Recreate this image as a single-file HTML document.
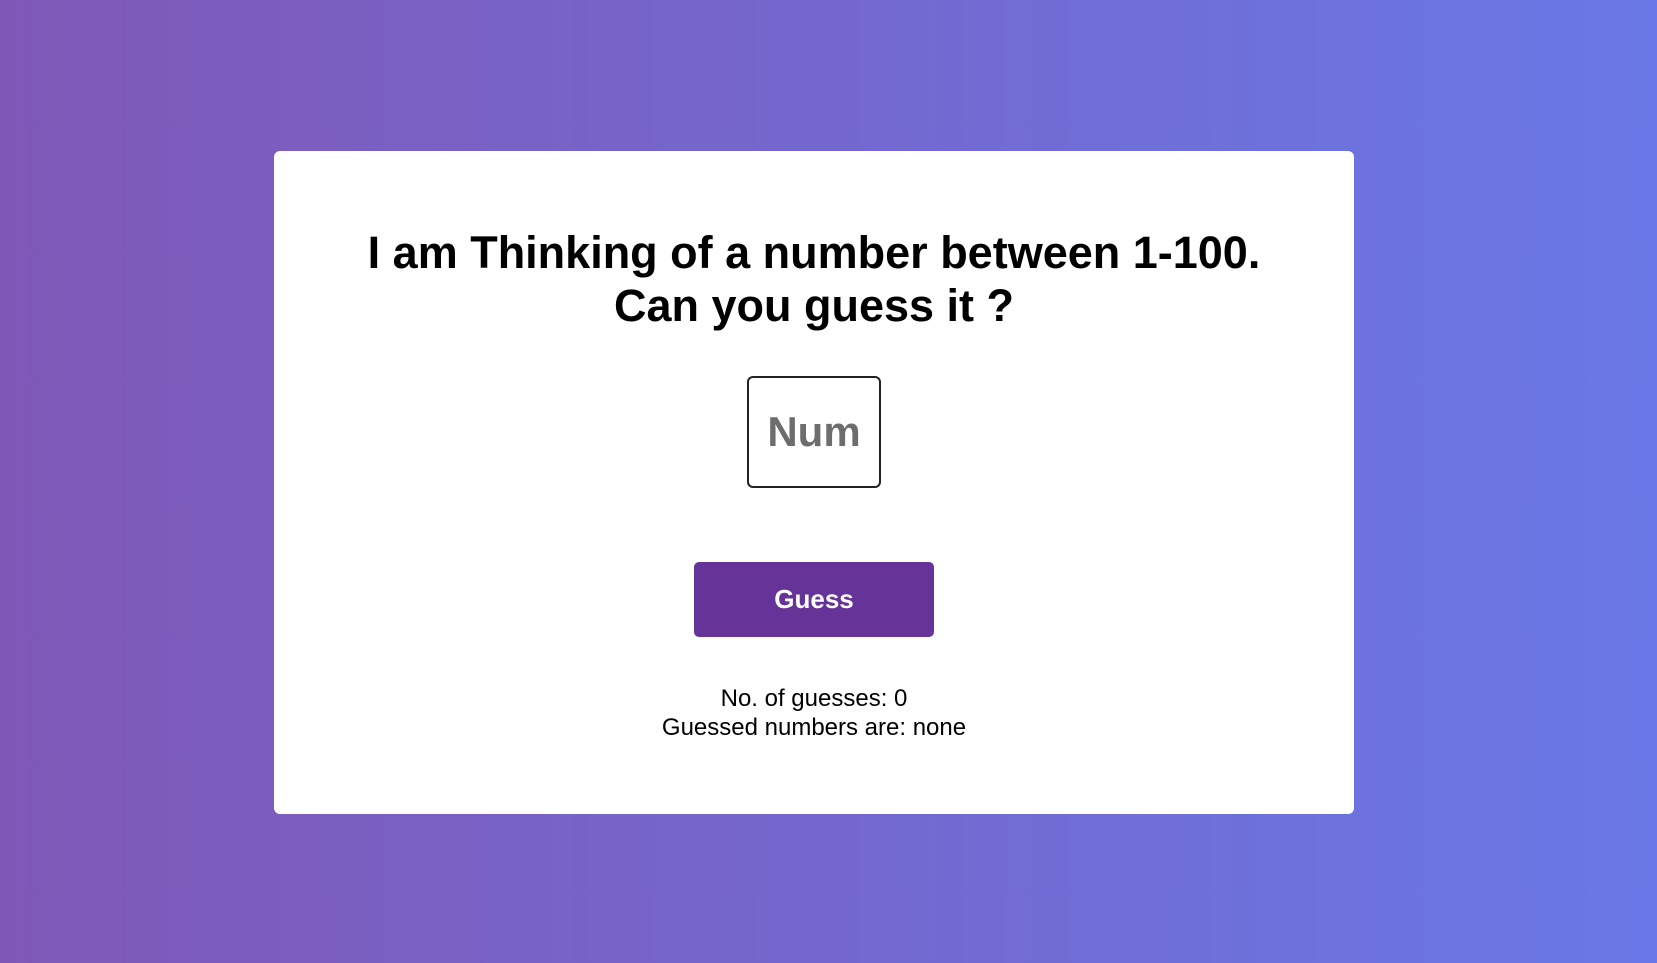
<!DOCTYPE html>
<html><head><style>
html,body{margin:0;padding:0;width:1657px;height:963px;overflow:hidden}
body{background:linear-gradient(to right,#7f58b7,#6978e6);font-family:"Liberation Sans",Arial,sans-serif;position:relative}
.card{position:absolute;left:274px;top:151px;width:1080px;height:663px;background:#fff;border-radius:6px}
h1{position:absolute;left:274px;width:1080px;top:226px;margin:0;text-align:center;font-size:45px;line-height:53px;font-weight:bold;color:#000}
.inp{position:absolute;left:747px;top:376px;border:2.5px solid #222;border-radius:6px;box-sizing:border-box;width:134px;height:112px;text-align:center;line-height:108px;font-size:42px;font-weight:bold;color:#6d6d6d;background:#fff}
.btn{position:absolute;left:694px;top:562px;width:240px;height:75px;background:#663399;border-radius:5px;color:#fff;font-weight:bold;font-size:26px;text-align:center;line-height:75px}
.st{position:absolute;left:274px;width:1080px;top:684px;text-align:center;font-size:24px;line-height:29px;color:#000}
</style></head><body>
<div class="card"></div>
<h1>I am Thinking of a number between 1-100.<br>Can you guess it ?</h1>
<div class="inp">Num</div>
<div class="btn">Guess</div>
<div class="st">No. of guesses: 0<br>Guessed numbers are: none</div>
</body></html>
